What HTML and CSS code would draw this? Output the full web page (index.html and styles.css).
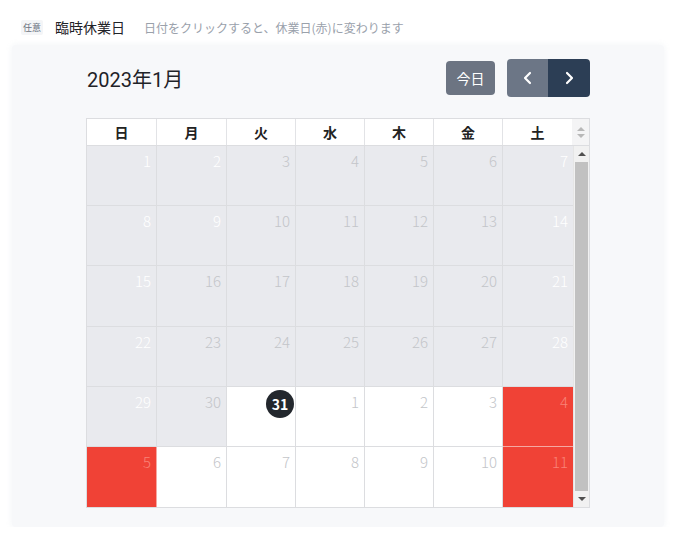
FILE: index.html
```html
<!DOCTYPE html>
<html lang="ja">
<head>
<meta charset="utf-8">
<title>臨時休業日</title>
<link rel="stylesheet" href="styles.css">
</head>
<body>
<div class="field-head">
  <span class="badge">任意</span>
  <span class="label">臨時休業日</span>
  <span class="hint">日付をクリックすると、休業日(赤)に変わります</span>
</div>
<div class="panel">
  <div class="toolbar">
    <h2 class="title">2023年1月</h2>
    <div class="actions">
      <button class="btn today">今日</button>
      <div class="nav">
        <button class="btn prev" aria-label="前へ"><svg width="12" height="14" viewBox="0 0 12 14"><path d="M8 2 L3 7 L8 12" fill="none" stroke="#fff" stroke-width="2.2" stroke-linecap="round" stroke-linejoin="round"/></svg></button>
        <button class="btn next" aria-label="次へ"><svg width="12" height="14" viewBox="0 0 12 14"><path d="M4 2 L9 7 L4 12" fill="none" stroke="#fff" stroke-width="2.2" stroke-linecap="round" stroke-linejoin="round"/></svg></button>
      </div>
    </div>
  </div>
  <div class="cal">
    <div class="cal-head">
      <div class="hcell">日</div>
      <div class="hcell">月</div>
      <div class="hcell">火</div>
      <div class="hcell">水</div>
      <div class="hcell">木</div>
      <div class="hcell">金</div>
      <div class="hcell">土</div>
      <div class="hscroll"><span class="tri up small"></span><span class="tri down small"></span></div>
    </div>
    <div class="cal-body">
      <div class="grid">
        <div class="cell past wk">1</div><div class="cell past wk">2</div><div class="cell past">3</div><div class="cell past">4</div><div class="cell past">5</div><div class="cell past">6</div><div class="cell past wk">7</div>
        <div class="cell past wk">8</div><div class="cell past wk">9</div><div class="cell past">10</div><div class="cell past">11</div><div class="cell past">12</div><div class="cell past">13</div><div class="cell past wk">14</div>
        <div class="cell past wk">15</div><div class="cell past">16</div><div class="cell past">17</div><div class="cell past">18</div><div class="cell past">19</div><div class="cell past">20</div><div class="cell past wk">21</div>
        <div class="cell past wk">22</div><div class="cell past">23</div><div class="cell past">24</div><div class="cell past">25</div><div class="cell past">26</div><div class="cell past">27</div><div class="cell past wk">28</div>
        <div class="cell past wk">29</div><div class="cell past">30</div><div class="cell today-cell"><span class="today-mark">31</span></div><div class="cell">1</div><div class="cell">2</div><div class="cell">3</div><div class="cell off">4</div>
        <div class="cell off">5</div><div class="cell">6</div><div class="cell">7</div><div class="cell">8</div><div class="cell">9</div><div class="cell">10</div><div class="cell off">11</div>
      </div>
      <div class="scrollbar">
        <span class="tri up"></span>
        <div class="thumb"></div>
        <span class="tri down"></span>
      </div>
    </div>
  </div>
</div>
</body>
</html>
```

FILE: styles.css
```css
* { box-sizing: border-box; }
body {
  margin: 0;
  background: #ffffff;
  font-family: "Noto Sans CJK JP", "Noto Sans", sans-serif;
  color: #1f2328;
}
.field-head {
  display: flex;
  align-items: center;
  height: 28px;
  margin-top: 13px;
  padding-left: 21px;
}
.badge {
  font-size: 9px;
  color: #6b7280;
  background: #f4f5f7;
  padding: 1px 2px;
  border-radius: 2px;
  margin-right: 12px;
}
.label {
  font-size: 14px;
  font-weight: 400;
  color: #1f2328;
  margin-right: 19px;
}
.hint {
  font-size: 12px;
  color: #9aa1ab;
}
.panel {
  margin: 4px 14px 0 12px;
  height: 482px;
  background: #f7f8fa;
  border-radius: 4px;
  padding: 14px 74px 0 74px;
  box-shadow: 0 0 6px rgba(240, 242, 245, 0.9);
}
.toolbar {
  display: flex;
  justify-content: space-between;
  align-items: center;
  height: 38px;
  margin-bottom: 21px;
}
.title {
  margin: 0 0 0 1px;
  font-family: "Roboto", "Noto Sans CJK JP", sans-serif;
  font-size: 20px;
  font-weight: 400;
  color: #1f2328;
}
.actions {
  display: flex;
  align-items: center;
  gap: 12px;
}
.btn {
  border: 0;
  margin: 0;
  font-family: inherit;
  color: #fff;
  cursor: pointer;
  display: flex;
  align-items: center;
  justify-content: center;
}
.today {
  width: 49px;
  height: 34px;
  background: #6c7482;
  border-radius: 4px;
  font-size: 14px;
}
.nav {
  display: flex;
  border-radius: 4px;
  overflow: hidden;
  height: 38px;
}
.prev {
  width: 41px;
  background: #6c7686;
}
.next {
  width: 42px;
  background: #2c3e55;
}
.cal {
  width: 504px;
  border: 1px solid #dcdde0;
  background: #fff;
}
.cal-head {
  display: grid;
  grid-template-columns: 70px 70px 69px 69px 69px 69px 69px 1fr;
  height: 27px;
  border-bottom: 1px solid #dcdde0;
}
.hcell {
  display: flex;
  align-items: center;
  justify-content: center;
  font-size: 14px;
  font-weight: 700;
  color: #222;
  border-right: 1px solid #e2e3e6;
}
.hcell:nth-child(7) { border-right: 0; }
.hscroll {
  display: flex;
  flex-direction: column;
  align-items: center;
  justify-content: center;
  gap: 3px;
  background: #f4f4f5;
}
.cal-body {
  display: flex;
  height: 361px;
}
.grid {
  flex: 0 0 486px;
  display: grid;
  grid-template-columns: 70px 70px 69px 69px 69px 69px 70px;
  grid-template-rows: repeat(6, 1fr);
}
.cell {
  border-right: 1px solid #dcdde0;
  border-bottom: 1px solid #dcdde0;
  text-align: right;
  padding: 5px 5px 0 0;
  font-size: 15px;
  line-height: 20px;
  font-weight: 300;
  color: #c3c5c9;
  background: #fff;
  position: relative;
}
.cell:nth-child(7n) { border-right: 0; }
.cell:nth-last-child(-n+7) { border-bottom: 0; }
.past { background: #e9eaee; }
.past.wk { color: #ffffff; }
.off { background: #f04236; color: #f98378; border-color: #f5a8a2; }
.today-cell { padding: 3px 1px 0 0; }
.today-mark {
  display: inline-flex;
  align-items: center;
  justify-content: center;
  width: 28px;
  height: 28px;
  border-radius: 50%;
  background: #23272d;
  color: #fff;
  font-weight: 700;
  font-size: 14px;
}
.scrollbar {
  flex: 1;
  display: flex;
  flex-direction: column;
  align-items: center;
  background: #f1f1f1;
  border-left: 1px solid #e5e5e5;
  padding: 6px 0 6px;
}
.thumb {
  width: 13px;
  flex: 1;
  margin: 6px 0 6px;
  background: #c1c1c1;
}
.tri {
  width: 0;
  height: 0;
  border-left: 4px solid transparent;
  border-right: 4px solid transparent;
}
.tri.up { border-bottom: 4px solid #505050; }
.tri.down { border-top: 4px solid #505050; }
.tri.small.up { border-bottom-color: #b8b8b8; }
.tri.small.down { border-top-color: #b8b8b8; }
```
